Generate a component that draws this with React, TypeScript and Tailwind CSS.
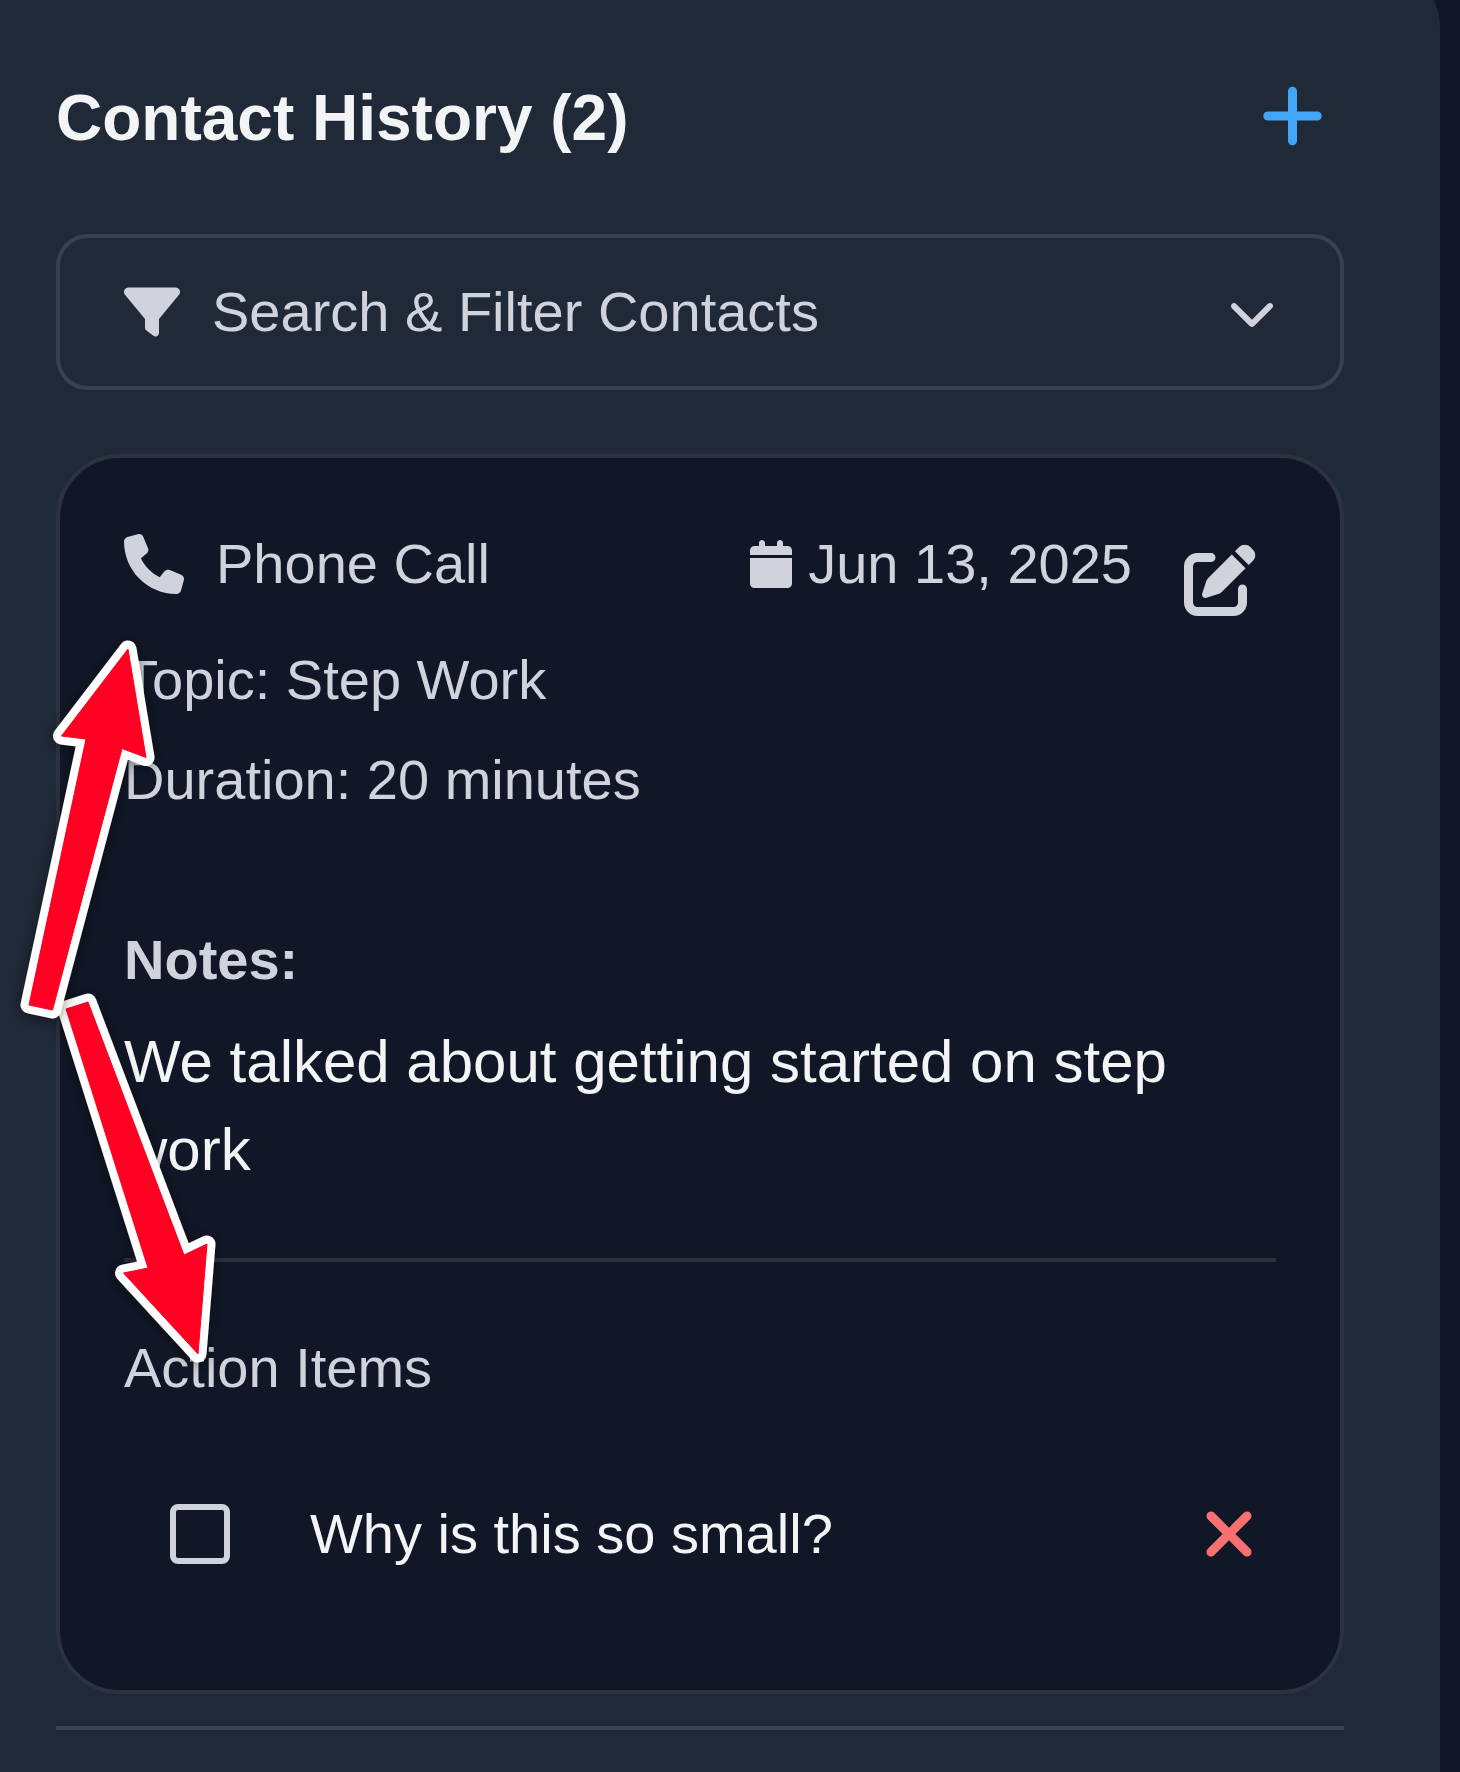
import { useState } from "react";
import {
  FaCalendar,
  FaChevronDown,
  FaFilter,
  FaPenToSquare,
  FaPhone,
  FaPlus,
  FaXmark,
} from "react-icons/fa6";

function ActionItem({ label }: { label: string }) {
  const [done, setDone] = useState(false);
  return (
    <li className="flex items-center justify-between py-[50px] pr-5 pl-[46px]">
      <label className="flex items-center gap-20 text-[56px] leading-[84px] text-[#f3f4f6]">
        <input
          type="checkbox"
          checked={done}
          onChange={(e) => setDone(e.target.checked)}
          className="size-[60px] shrink-0 appearance-none rounded-lg border-[6px] border-[#d1d3dc] checked:bg-[#42a5f5]"
        />
        {label}
      </label>
      <button type="button" aria-label="Delete action item" className="text-[#f87171]">
        <FaXmark className="h-[72px] w-[54px]" />
      </button>
    </li>
  );
}

function ContactCard() {
  return (
    <article className="mt-16 rounded-[64px] border-4 border-[#2d323f] bg-[#111726] p-16 text-[56px] leading-[84px] text-[#d1d3dc]">
      <header className="flex items-start justify-between">
        <div className="flex items-center gap-8">
          <FaPhone className="size-[60px]" />
          <span>Phone Call</span>
        </div>
        <div className="flex items-start gap-8">
          <div className="flex items-center gap-4">
            <FaCalendar className="h-12 w-[42px]" />
            <time dateTime="2025-06-13">Jun 13, 2025</time>
          </div>
          <button
            type="button"
            aria-label="Edit contact"
            className="flex h-29 w-28 items-center justify-center"
          >
            <FaPenToSquare className="size-18" />
          </button>
        </div>
      </header>
      <p>Topic: Step Work</p>
      <p className="mt-4">Duration: 20 minutes</p>
      <h3 className="mt-24 font-bold">Notes:</h3>
      <p className="mt-4 text-[60px] leading-[88px] text-[#f3f4f6]">
        We talked about getting started on step work
      </p>
      <hr className="my-16 border-t-4 border-[#2d323f]" />
      <h3>Action Items</h3>
      <ul className="mt-8">
        <ActionItem label="Why is this so small?" />
      </ul>
    </article>
  );
}

function ArrowShape({ points }: { points: string }) {
  return (
    <g filter="url(#arrow-shadow)" strokeLinejoin="round">
      <polygon points={points} fill="#fff" stroke="#fff" strokeWidth="17" />
      <polygon points={points} fill="#ff0022" stroke="#ff0022" strokeWidth="1" />
    </g>
  );
}

function ArrowAnnotations() {
  return (
    <svg
      aria-hidden="true"
      viewBox="0 0 240 1400"
      className="pointer-events-none absolute top-0 left-0 h-[1400px] w-60"
    >
      <defs>
        <filter id="arrow-shadow" x="-50%" y="-20%" width="200%" height="140%">
          <feDropShadow dx="0" dy="2" stdDeviation="7" floodColor="#000" floodOpacity="0.45" />
        </filter>
      </defs>
      <ArrowShape points="66,1009 88,1002 184,1255 207,1244 198,1354 123.5,1273 148,1268" />
      <ArrowShape points="128,649 61.5,736 86,739 29,1005 52.5,1010 122,748.5 146,757.5" />
    </svg>
  );
}

export default function App() {
  return (
    <div
      className="relative min-h-screen overflow-hidden bg-[#111726] pr-5"
      style={{ fontFamily: '"Liberation Sans", Arial, sans-serif' }}
    >
      <main className="-mt-9 min-h-[calc(100vh+36px)] rounded-tr-[64px] bg-[#202937] pt-[102px] pr-24 pl-14">
        <div className="flex h-26 items-start justify-between">
          <h2 className="text-[64px] leading-[104px] font-bold text-[#f3f4f6]">
            Contact History (2)
          </h2>
          <button
            type="button"
            aria-label="Add contact"
            className="flex h-25 w-26 items-center justify-center text-[#42a5f5]"
          >
            <FaPlus className="h-[72px] w-[63px]" />
          </button>
        </div>
        <button
          type="button"
          className="mt-16 flex w-full items-center gap-8 rounded-[32px] border-4 border-[#38414d] px-16 py-8 text-left text-[56px] leading-[84px] text-[#d1d3dc]"
        >
          <FaFilter className="size-14" />
          <span className="grow">Search &amp; Filter Contacts</span>
          <FaChevronDown className="size-12" />
        </button>
        <ContactCard />
        <hr className="mt-8 border-t-4 border-[#374150]" />
      </main>
      <ArrowAnnotations />
    </div>
  );
}
